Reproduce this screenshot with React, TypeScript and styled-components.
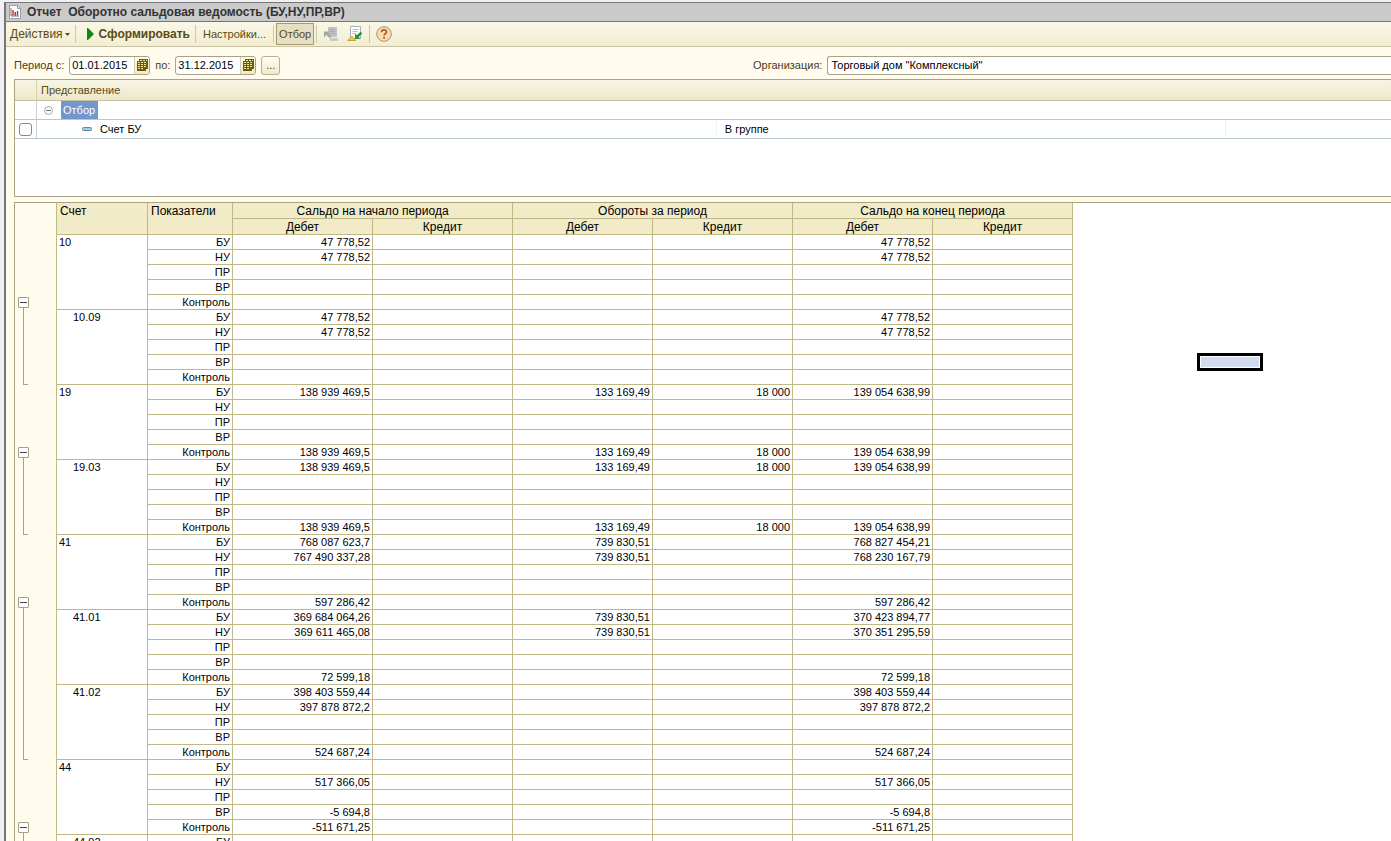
import React from "react";
import styled, { createGlobalStyle } from "styled-components";

const GlobalStyle = createGlobalStyle`
  * { box-sizing: border-box; }
  html, body, #root { height: 100%; }
  body {
    margin: 0;
    overflow: hidden;
    font-family: "Liberation Sans", Arial, sans-serif;
    font-size: 11px;
    color: #000;
    background: #ece9d8;
  }
  button, input { font: inherit; color: inherit; }
`;

const line = "#c0b987";
const frame = "#a9a383";
const brown = "#5a4a17";

const Window = styled.main`
  display: flex;
  flex-direction: column;
  height: 100vh;
  padding: 2px 0 0 4px;
  background: #f0f0f4;
`;

const Body = styled.div`
  flex: 1;
  min-height: 0;
  display: flex;
  flex-direction: column;
  border-left: 2px solid #777;
  background: #fffcee;
`;

const TitleBar = styled.header`
  display: flex;
  align-items: center;
  gap: 6px;
  height: 20px;
  padding-left: 3px;
  background: #cacaca;
  border-top: 1px solid #777;
  border-bottom: 1px solid #777;
`;

const Title = styled.h1`
  margin: 0;
  font-size: 12px;
  line-height: 18px;
  font-weight: bold;
  color: #333;
  white-space: pre;
`;

const Toolbar = styled.nav`
  display: flex;
  align-items: center;
  height: 25px;
  padding: 0 1px;
  background: linear-gradient(#faf7e6, #f3eed2);
  border-bottom: 1px solid #c8c3a4;
`;

const ToolButton = styled.button<{ $active?: boolean }>`
  display: flex;
  align-items: center;
  gap: 2px;
  height: 22px;
  padding: 0 2px;
  border: 1px solid ${(p) => (p.$active ? "#a39a72" : "transparent")};
  background: ${(p) => (p.$active ? "#e6dfc2" : "transparent")};
  color: ${brown};
  white-space: nowrap;
`;

const MenuButton = styled(ToolButton)`
  font-size: 12px;
`;

const SettingsButton = styled(ToolButton)`
  padding: 0 4px;
`;

const IconButton = styled(ToolButton)`
  padding: 0 3px;
`;

const RunButton = styled(ToolButton)`
  gap: 5px;
  padding: 0 2px 0 8px;
  font-size: 12px;
  font-weight: bold;
`;

const Separator = styled.span`
  width: 1px;
  height: 18px;
  margin: 0 2px;
  background: #cfc9aa;
`;

const FilterBar = styled.div`
  display: flex;
  align-items: center;
  height: 32px;
  padding: 4px 0 0 8px;
  color: #4a4020;
`;

const Field = styled.label`
  display: flex;
  align-items: center;
  gap: 5px;
  margin-right: 5px;
  white-space: nowrap;
`;

const Period = styled.div`
  display: flex;
  align-items: center;
  flex: 0 0 739px;
`;

const OrgField = styled(Field)`
  flex: 1;
  margin-right: 0;
`;

const InputBox = styled.span`
  display: flex;
  height: 19px;
  border: 1px solid ${frame};
  border-radius: 3px;
  background: #fff;
  overflow: hidden;
`;

const DateInput = styled.input`
  width: 64px;
  padding: 0 2px;
  border: 0;
  background: transparent;
  color: #000;
`;

const OrgInput = styled.input`
  flex: 1;
  min-width: 0;
  height: 19px;
  padding: 0 3px;
  border: 1px solid ${frame};
  border-right: 0;
  border-radius: 3px 0 0 3px;
  background: #fff;
  color: #000;
`;

const PickButton = styled.button`
  display: flex;
  align-items: center;
  justify-content: center;
  width: 15px;
  padding: 0;
  border: 0;
  border-left: 1px solid #d6cfae;
  background: linear-gradient(#fffdf2, #efe9c8);
`;

const MoreButton = styled.button`
  width: 19px;
  height: 19px;
  padding: 0;
  border: 1px solid #b9b28c;
  border-radius: 3px;
  background: linear-gradient(#fffdf4, #efe9cb);
  line-height: 14px;
`;

const FilterTable = styled.table`
  width: 100%;
  border-collapse: separate;
  border-spacing: 0;
  table-layout: fixed;
`;

const FilterPane = styled.section`
  flex: 0 0 118px;
  margin-left: 8px;
  border: 1px solid ${frame};
  border-right: 0;
  background: #fff;
`;

const FilterHead = styled.th`
  height: 21px;
  padding: 0 4px;
  border-right: 1px solid #d8d2ad;
  border-bottom: 1px solid #c4c0a0;
  background: linear-gradient(#f6f4e6, #efe9c9);
  color: ${brown};
  font-weight: normal;
  text-align: left;

  &:last-child { border-right: 0; }
`;

const FilterCell = styled.td<{ $first?: boolean }>`
  height: 19px;
  padding: 0 4px;
  border-right: 1px solid ${(p) => (p.$first ? "#c3ced6" : "#f1f1f1")};
  border-bottom: 1px solid #b9c7d0;

  &:last-child { border-right: 0; }
`;

const ValueCell = styled(FilterCell)`
  padding: 0 8px;
`;

const TreeItem = styled.div<{ $depth: number }>`
  display: flex;
  align-items: center;
  gap: 8px;
  height: 18px;
  padding-left: ${(p) => p.$depth * 38 + 3}px;
`;

const Selected = styled.span`
  padding: 0 3px 0 2px;
  line-height: 18px;
  background: #7396cf;
  color: #fff;
`;

const Check = styled.input`
  appearance: none;
  display: block;
  width: 13px;
  height: 13px;
  margin: 0;
  border: 1px solid #8f8b72;
  border-radius: 3px;
  background: #fff;
`;

const Sheet = styled.section`
  position: relative;
  flex: 1;
  min-height: 0;
  display: flex;
  align-items: flex-start;
  margin: 5px 0 0 8px;
  border-top: 1px solid ${frame};
  border-left: 1px solid ${frame};
  background: #fff;
  overflow: hidden;
`;

const Rail = styled.div`
  flex: 0 0 41px;
  padding: 32px 0 0 3px;
  background: #fffcee;
`;

const RailBlock = styled.div`
  display: flex;
  flex-direction: column;
  align-items: flex-start;
`;

const RailParent = styled.div`
  display: flex;
  align-items: flex-end;
  height: 75px;
  padding-bottom: 2px;
`;

const Toggle = styled.button`
  display: flex;
  align-items: center;
  justify-content: center;
  width: 11px;
  height: 11px;
  padding: 0;
  border: 1px solid #a39e84;
  border-radius: 1px;
  background: #fff;
`;

const RailLine = styled.div<{ $count: number }>`
  width: 5px;
  height: ${(p) => p.$count * 75 + 2}px;
  margin: -2px 0 0 5px;
  border-left: 1px solid ${frame};
  border-bottom: 1px solid ${frame};
`;

const Report = styled.table`
  width: 1017px;
  border-collapse: collapse;
  table-layout: fixed;
  margin-top: -1px;
`;

const Head = styled.th<{ $left?: boolean }>`
  height: 16px;
  padding: 1px 3px 0;
  border: 1px solid ${line};
  background: #f2ebc8;
  font-size: 12px;
  line-height: 14px;
  font-weight: normal;
  text-align: ${(p) => (p.$left ? "left" : "center")};
  vertical-align: top;
  white-space: nowrap;
`;

const Cell = styled.td`
  height: 15px;
  padding: 0 2px;
  border: 1px solid ${line};
  font-size: 11px;
  line-height: 14px;
  text-align: right;
  white-space: nowrap;
`;

const Account = styled.th<{ $child?: boolean }>`
  padding: 0 0 0 ${(p) => (p.$child ? 16 : 2)}px;
  border: 1px solid ${line};
  font-size: 11px;
  line-height: 14px;
  font-weight: normal;
  text-align: left;
  vertical-align: top;
`;

const CellCursor = styled.div`
  position: absolute;
  left: 1182px;
  top: 150px;
  width: 66px;
  height: 18px;
  border: 3px solid #000;
  background: #d3dcee;
  box-shadow: inset 0 0 0 1px #fff;
`;

type Row = [string?, string?, string?, string?, string?, string?];
type AccountData = { code: string; child?: boolean; rows: Row[] };

const indicators = ["БУ", "НУ", "ПР", "ВР", "Контроль"];
const same = (v: string): Row => [v, "", "", "", v];
const vat: Row = ["138 939 469,5", "", "133 169,49", "18 000", "139 054 638,99"];

const accounts: AccountData[] = [
  { code: "10", rows: [same("47 778,52"), same("47 778,52"), [], [], []] },
  { code: "10.09", child: true, rows: [same("47 778,52"), same("47 778,52"), [], [], []] },
  { code: "19", rows: [vat, [], [], [], vat] },
  { code: "19.03", child: true, rows: [vat, [], [], [], vat] },
  {
    code: "41",
    rows: [
      ["768 087 623,7", "", "739 830,51", "", "768 827 454,21"],
      ["767 490 337,28", "", "739 830,51", "", "768 230 167,79"],
      [],
      [],
      same("597 286,42"),
    ],
  },
  {
    code: "41.01",
    child: true,
    rows: [
      ["369 684 064,26", "", "739 830,51", "", "370 423 894,77"],
      ["369 611 465,08", "", "739 830,51", "", "370 351 295,59"],
      [],
      [],
      same("72 599,18"),
    ],
  },
  { code: "41.02", child: true, rows: [same("398 403 559,44"), same("397 878 872,2"), [], [], same("524 687,24")] },
  { code: "44", rows: [[], same("517 366,05"), [], same("-5 694,8"), same("-511 671,25")] },
];

// The account after the last complete block; only its first row fits in the window.
const nextAccount = { code: "44.02", indicator: "БУ" };

const railGroups = [1, 1, 2, 1];
const periods = ["Сальдо на начало периода", "Обороты за период", "Сальдо на конец периода"];
const valueColumns = [0, 1, 2, 3, 4, 5];

const ReportIcon = () => (
  <svg width="12" height="14" viewBox="0 0 12 14" aria-hidden="true">
    <path d="M.5 .5h8l3 3v10H.5z" fill="#fff" stroke="#8ba3b8" />
    <path d="M8.500 .5v3h3" fill="none" stroke="#8ba3b8" />
    <path d="M2 3v8h8" fill="none" stroke="#8a6a6a" />
    <path d="M4 5v5.500M8.500 6v4.500" stroke="#b8322a" strokeWidth="1.400" />
    <path d="M6.300 7v3.500" stroke="#7a3b3b" strokeWidth="1.400" />
  </svg>
);

const CaretIcon = () => (
  <svg width="5" height="3" viewBox="0 0 5 3" aria-hidden="true">
    <path d="M0 0h5L2.500 3z" fill={brown} />
  </svg>
);

const PlayIcon = () => (
  <svg width="7" height="12" viewBox="0 0 7 12" aria-hidden="true">
    <path d="M0 0h1l6 6-6 6H0z" fill="#0a8a12" />
  </svg>
);

const CopyIcon = () => (
  <svg width="16" height="16" viewBox="0 0 16 16" aria-hidden="true">
    <path d="M5 1h9v10H5z" fill="#c2c2c2" />
    <path d="M7 3.500h5M7 5.500h5M7 7.500h5" stroke="#a8a8a8" />
    <path d="M7 12l8 0v3H7z" fill="#cbcbcb" />
    <path d="M1 5.500h6L5.200 7.300l3.300 3.200-1.700 1.700-3.300-3.200L1 11.500z" fill="#9fa9a4" />
  </svg>
);

const RestoreIcon = () => (
  <svg width="16" height="16" viewBox="0 0 16 16" aria-hidden="true">
    <path d="M3.500 .5h10v12h-10z" fill="#fff" stroke="#9fb3c0" />
    <path d="M5.500 3.500h6M5.500 5.500h5M5.500 7.500h3" stroke="#a9bcc8" />
    <path d="M.8 14.500l4-4.500 4 4.500z" fill="#f3c94d" stroke="#cda136" />
    <path d="M8 13V7.500l1.800 1.800 3.700-3.600 1.800 1.800-3.600 3.700 1.800 1.800z" fill="#2a9434" />
  </svg>
);

const HelpIcon = () => (
  <svg width="16" height="16" viewBox="0 0 16 16" aria-hidden="true">
    <circle cx="8" cy="8" r="7.300" fill="#fbdcae" stroke="#a3937a" />
    <path d="M5.600 6.200c0-3.200 4.900-3.100 4.900-.3 0 1.800-2.400 1.700-2.400 3.600" fill="none" stroke="#a8561c" strokeWidth="1.600" />
    <circle cx="8.100" cy="11.800" r="1" fill="#a8561c" />
  </svg>
);

const CalendarIcon = () => (
  <svg width="11" height="12" viewBox="0 0 11 12" aria-hidden="true">
    <path d="M2 0h9v10H9v2H0V2h2z" fill="#6e5c0d" />
    <path
      d="M3 1h2v1H3zM6 1h2v1H6zM9 1h1v1H9zM1 3h2v1H1zM4 3h2v1H4zM7 3h2v1H7zM1 5h2v1H1zM4 5h2v1H4zM7 5h2v1H7zM1 7h2v1H1zM4 7h2v1H4zM7 7h2v1H7zM1 9h2v1H1zM4 9h2v1H4z"
      fill="#f0e69a"
    />
  </svg>
);

const CollapseIcon = () => (
  <svg width="9" height="9" viewBox="0 0 9 9" aria-hidden="true">
    <circle cx="4.500" cy="4.500" r="4" fill="#fff" stroke="#a5a5a5" />
    <path d="M2 4.500h5" stroke="#777" />
  </svg>
);

const ItemIcon = () => (
  <svg width="10" height="4" viewBox="0 0 10 4" aria-hidden="true">
    <rect x=".5" y=".5" width="9" height="3" rx="1" fill="#a8cbe2" stroke="#5f87a3" />
  </svg>
);

const MinusIcon = () => (
  <svg width="7" height="1" viewBox="0 0 7 1" aria-hidden="true">
    <path d="M0 0h7v1H0z" fill="#444" />
  </svg>
);

export default function App() {
  return (
    <Window>
      <GlobalStyle />
      <Body>
        <TitleBar>
          <ReportIcon />
          <Title>{"Отчет  Оборотно сальдовая ведомость (БУ,НУ,ПР,ВР)"}</Title>
        </TitleBar>
        <Toolbar>
          <MenuButton>Действия<CaretIcon /></MenuButton>
          <Separator />
          <RunButton><PlayIcon />Сформировать</RunButton>
          <Separator />
          <SettingsButton>Настройки...</SettingsButton>
          <Separator />
          <ToolButton $active>Отбор</ToolButton>
          <Separator />
          <IconButton aria-label="Сохранить значения"><CopyIcon /></IconButton>
          <IconButton aria-label="Восстановить значения"><RestoreIcon /></IconButton>
          <Separator />
          <IconButton aria-label="Справка"><HelpIcon /></IconButton>
        </Toolbar>
        <FilterBar>
          <Period>
            <Field htmlFor="from">Период с:
              <InputBox>
                <DateInput id="from" defaultValue="01.01.2015" />
                <PickButton aria-label="Выбрать начало"><CalendarIcon /></PickButton>
              </InputBox>
            </Field>
            <Field htmlFor="to">по:
              <InputBox>
                <DateInput id="to" defaultValue="31.12.2015" />
                <PickButton aria-label="Выбрать конец"><CalendarIcon /></PickButton>
              </InputBox>
            </Field>
            <MoreButton>...</MoreButton>
          </Period>
          <OrgField htmlFor="org">Организация:
            <OrgInput id="org" defaultValue={'Торговый дом "Комплексный"'} />
          </OrgField>
        </FilterBar>
        <FilterPane>
          <FilterTable>
            <colgroup>
              <col style={{ width: 22 }} />
              <col />
              <col style={{ width: "37%" }} />
              <col style={{ width: "12%" }} />
            </colgroup>
            <thead>
              <tr>
                <FilterHead aria-label="Использование" />
                <FilterHead colSpan={3}>Представление</FilterHead>
              </tr>
            </thead>
            <tbody>
              <tr>
                <FilterCell $first />
                <FilterCell colSpan={3}>
                  <TreeItem $depth={0}><CollapseIcon /><Selected>Отбор</Selected></TreeItem>
                </FilterCell>
              </tr>
              <tr>
                <FilterCell $first><Check type="checkbox" aria-label="Счет БУ" /></FilterCell>
                <FilterCell><TreeItem $depth={1}><ItemIcon />Счет БУ</TreeItem></FilterCell>
                <ValueCell>В группе</ValueCell>
                <FilterCell />
              </tr>
            </tbody>
          </FilterTable>
        </FilterPane>
        <Sheet>
          <Rail>
            {railGroups.map((count, i) => (
              <RailBlock key={i}>
                <RailParent><Toggle aria-label="Свернуть"><MinusIcon /></Toggle></RailParent>
                <RailLine $count={count} />
              </RailBlock>
            ))}
          </Rail>
          <Report>
            <colgroup>
              <col style={{ width: 91 }} />
              <col style={{ width: 85 }} />
              {valueColumns.map((i) => <col key={i} style={{ width: 140 }} />)}
            </colgroup>
            <thead>
              <tr>
                <Head $left rowSpan={2}>Счет</Head>
                <Head $left rowSpan={2}>Показатели</Head>
                {periods.map((p) => <Head key={p} colSpan={2}>{p}</Head>)}
              </tr>
              <tr>
                {periods.map((p) => (
                  <React.Fragment key={p}><Head>Дебет</Head><Head>Кредит</Head></React.Fragment>
                ))}
              </tr>
            </thead>
            <tbody>
              {accounts.map((a) =>
                indicators.map((name, r) => (
                  <tr key={a.code + name}>
                    {r === 0 && <Account $child={a.child} rowSpan={5}>{a.code}</Account>}
                    <Cell>{name}</Cell>
                    {valueColumns.map((c) => <Cell key={c}>{a.rows[r][c]}</Cell>)}
                  </tr>
                ))
              )}
              <tr>
                <Account $child>{nextAccount.code}</Account>
                <Cell>{nextAccount.indicator}</Cell>
                {valueColumns.map((c) => <Cell key={c} />)}
              </tr>
            </tbody>
          </Report>
          <CellCursor />
        </Sheet>
      </Body>
    </Window>
  );
}
